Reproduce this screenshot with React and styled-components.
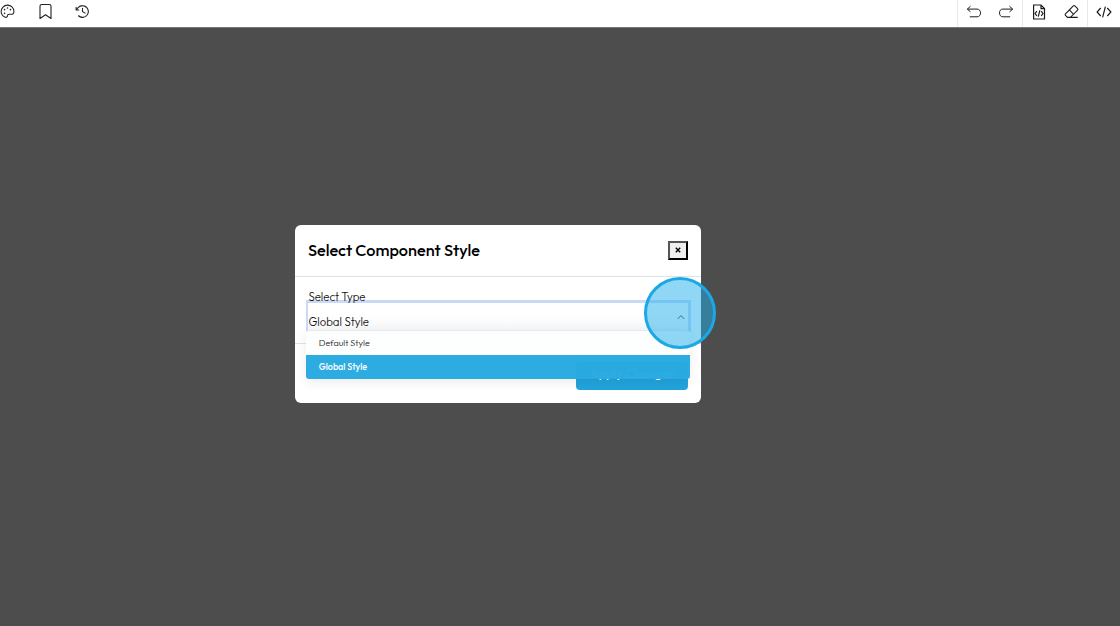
import styled, { createGlobalStyle } from 'styled-components';
import { PiPalette, PiClockCounterClockwise, PiEraser } from 'react-icons/pi';

const GlobalStyle = createGlobalStyle`
  * {
    box-sizing: border-box;
  }

  body {
    margin: 0;
    overflow: hidden;
    font-family: Outfit, Lato, sans-serif;
    color: #111;
  }
`;

const Page = styled.div`
  display: flex;
  flex-direction: column;
  height: 100vh;
  background: #4d4d4d;
`;

const Toolbar = styled.header`
  display: flex;
  justify-content: space-between;
  flex: none;
  height: 28px;
  background: #fff;
  border-bottom: 1px solid #777;
`;

const PanelIcons = styled.div`
  display: flex;
  gap: 20.5px;
  height: 23px;
  margin-left: -1px;
  align-items: center;
  color: #222;

  svg {
    width: 17px;
    height: 17px;
    display: block;
  }
`;

const Actions = styled.div`
  display: flex;
`;

const ActionGroup = styled.div`
  display: flex;
  width: ${({ $width }) => $width}px;
  border-left: 1px solid #e6e8ea;
`;

const Action = styled.span`
  display: flex;
  flex: 1;
  height: 23px;
  align-items: center;
  justify-content: center;
  color: #1c1c1c;

  svg {
    display: block;
    flex: none;
  }
`;

const Overlay = styled.main`
  display: flex;
  flex: 1;
  justify-content: center;
  align-items: flex-start;
  padding: 197px 124px 0 0;
`;

const Modal = styled.section`
  width: 406px;
  height: 178px;
  background: #fff;
  border-radius: 6px;
`;

const ModalHeader = styled.div`
  display: flex;
  justify-content: space-between;
  align-items: center;
  height: 52px;
  padding: 0 13px;
  border-bottom: 1px solid #dfe1e3;
`;

const Title = styled.h2`
  margin: 0 0 1px;
  font-size: 16.3px;
  font-weight: 500;
  line-height: 20px;
  color: #000;
`;

const CloseButton = styled.button`
  display: flex;
  justify-content: center;
  align-items: center;
  width: 20px;
  height: 19px;
  margin-top: -1px;
  padding: 0;
  background: #efefef;
  border: 2px solid;
  border-color: #555 #000 #000 #555;
  color: #000;
`;

const ModalBody = styled.div`
  position: relative;
  height: 67px;
  padding: 12px 11px 0;
  border-bottom: 1px solid #dfe1e3;
`;

const Label = styled.label`
  position: relative;
  z-index: 1;
  display: block;
  height: 11px;
  padding-left: 2.5px;
  font-size: 11.4px;
  font-weight: 300;
  line-height: 16px;
`;

const Select = styled.div`
  display: flex;
  justify-content: space-between;
  align-items: center;
  width: 385px;
  height: 32px;
  padding: 8px 3px 0 0.5px;
  border: 3px solid #c8daf7;
  border-width: 3px 3px 0 2px;
  background: linear-gradient(#fff 40%, #f5f6f8);
  font-size: 11.4px;
  font-weight: 300;
  line-height: 16px;
`;

const Caret = styled.svg`
  width: 8px;
  height: 6px;
  margin-top: -9px;
`;

const Options = styled.ul`
  position: absolute;
  top: 53px;
  left: 11.4px;
  z-index: 2;
  width: 383.6px;
  margin: 0;
  padding: 0;
  list-style: none;
  border-top: 1px solid #e6ebf2;
  border-radius: 3px;
  background: #fdfefe;
  box-shadow: 0 3px 12px rgba(0, 0, 0, 0.08);
  opacity: 0.98;
  overflow: hidden;
`;

const Option = styled.li`
  height: 24px;
  padding-left: 12.4px;
  font-size: 9px;
  font-weight: ${({ $selected }) => ($selected ? 500 : 300)};
  line-height: 24px;
  color: ${({ $selected }) => ($selected ? '#fff' : '#222')};
  background: ${({ $selected }) => ($selected ? '#29abe2' : 'transparent')};
`;

const ModalFooter = styled.div`
  display: flex;
  justify-content: flex-end;
  padding: 17px 13px 0;
`;

const ApplyButton = styled.button`
  width: 112px;
  height: 29px;
  padding: 0 0 4px;
  border: 0;
  border-radius: 4px;
  background: #22a4dc;
  color: #fff;
  font: 500 12.5px/25px Outfit, Lato, sans-serif;
`;

const ClickMarker = styled.span`
  position: absolute;
  top: 277px;
  left: 644px;
  z-index: 3;
  width: 72px;
  height: 72px;
  border: 3px solid #1ba8e4;
  border-radius: 50%;
  background: rgba(34, 174, 236, 0.5);
`;

const BookmarkIcon = () => (
  <svg viewBox="0 0 17 17" fill="none" stroke="currentColor" strokeWidth="1.1" strokeLinejoin="round">
    <path d="M3 15.5V3.200c0-1.100.7-1.700 1.700-1.700h7.600c1 0 1.700.6 1.700 1.700v12.300l-5.500-3.800z" />
  </svg>
);

const UndoIcon = ({ flip }) => (
  <svg width="16" height="14" viewBox="0 0 16 14" fill="none" stroke="currentColor" strokeWidth="1">
    <g transform={flip ? 'matrix(-1 0 0 1 16 0)' : undefined}>
      <path d="M4.500 1.200 1.300 4.100l3.200 2.800M1.500 4.100h9.600c2.100 0 3.400 1.500 3.400 3.800s-1.300 3.900-3.400 3.900H3.800" />
    </g>
  </svg>
);

const FileCodeIcon = () => (
  <svg width="14" height="16" viewBox="0 0 14 16" fill="none" stroke="currentColor" strokeWidth="1.2">
    <path d="M1.600 1h7.400l3.500 3.500V15H1.600zM9 1v3.600h3.500" />
    <path d="M4.900 7.200 3.100 9.500l1.800 2.300M9.200 7.200 11 9.500l-1.800 2.300M7.800 6.400l-1.500 6.200" />
  </svg>
);

const CodeIcon = () => (
  <svg width="16" height="12" viewBox="0 0 16 12" fill="none" stroke="currentColor" strokeWidth="1.2">
    <path d="M4.700 2 1.100 6l3.600 4M11.300 2l3.600 4-3.600 4M9.400.7 6.600 11.300" />
  </svg>
);

const options = ['Default Style', 'Global Style'];

const App = () => {
  const selected = 'Global Style';

  return (
    <Page>
      <GlobalStyle />
      <Toolbar>
        <PanelIcons>
          <PiPalette />
          <BookmarkIcon />
          <PiClockCounterClockwise />
        </PanelIcons>
        <Actions>
          <ActionGroup $width={65}>
            <Action><UndoIcon /></Action>
            <Action><UndoIcon flip /></Action>
          </ActionGroup>
          <ActionGroup $width={65}>
            <Action><FileCodeIcon /></Action>
            <Action><PiEraser size={17} /></Action>
          </ActionGroup>
          <ActionGroup $width={33}>
            <Action><CodeIcon /></Action>
          </ActionGroup>
        </Actions>
      </Toolbar>

      <Overlay>
        <Modal>
          <ModalHeader>
            <Title>Select Component Style</Title>
            <CloseButton aria-label="Close">
              <svg width="6" height="6" viewBox="0 0 6 6" stroke="currentColor" strokeWidth="1.4">
                <path d="M.8.8l4.400 4.400M5.200.8.8 5.200" />
              </svg>
            </CloseButton>
          </ModalHeader>
          <ModalBody>
            <Label>Select Type</Label>
            <Select>
              {selected}
              <Caret viewBox="0 0 8 6" fill="none" stroke="#333" strokeWidth="1">
                <path d="M.8 4.800 4 1.600l3.200 3.200" />
              </Caret>
            </Select>
            <Options>
              {options.map((name) => (
                <Option key={name} $selected={name === selected}>{name}</Option>
              ))}
            </Options>
          </ModalBody>
          <ModalFooter>
            <ApplyButton>Apply Changes</ApplyButton>
          </ModalFooter>
        </Modal>
      </Overlay>
      <ClickMarker />
    </Page>
  );
};

export default App;
